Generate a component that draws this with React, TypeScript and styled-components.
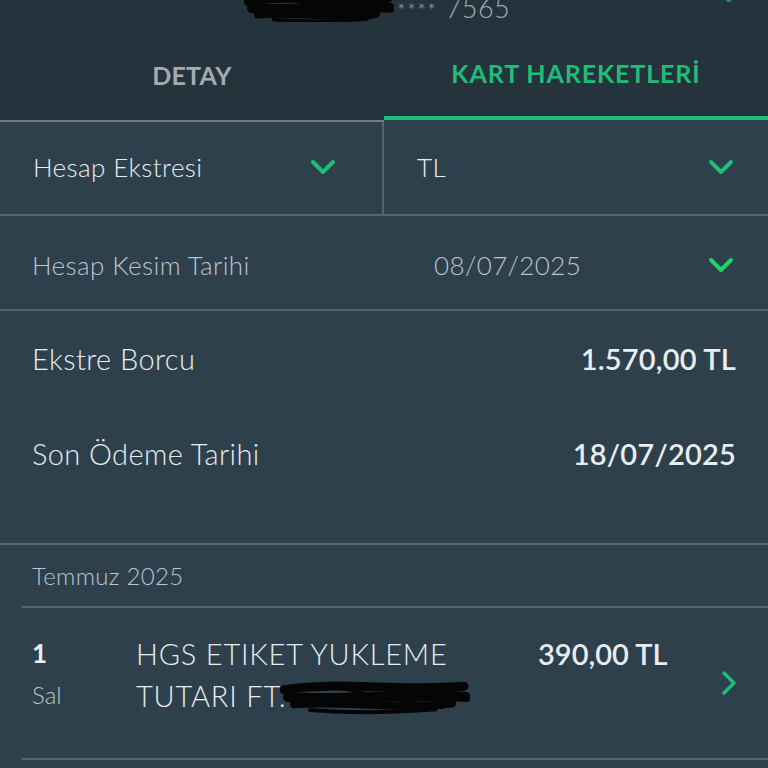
import React from "react";
import styled, { createGlobalStyle } from "styled-components";

const colors = {
  header: "#25333d",
  body: "#2e404c",
  line: "#55656f",
  green: "#1fbd78",
  brightGreen: "#1fd66a",
  text: "#e8edf0",
  muted: "#bcc5cb",
  tabMuted: "#a3abb1",
};

const GlobalStyle = createGlobalStyle`
  *, *::before, *::after {
    box-sizing: border-box;
  }
  html, body {
    margin: 0;
    padding: 0;
    background: ${colors.body};
  }
  body {
    font-family: Lato, "Noto Sans", sans-serif;
    -webkit-font-smoothing: antialiased;
  }
`;

const Screen = styled.div`
  width: 768px;
  height: 768px;
  overflow: hidden;
  background: ${colors.body};
  display: flex;
  flex-direction: column;
`;

const Header = styled.div`
  background: ${colors.header};
  height: 120px;
  flex-shrink: 0;
  display: flex;
  flex-direction: column;
`;

const CardLine = styled.div`
  position: relative;
  height: 22px;
  overflow: hidden;
  display: flex;
  align-items: flex-end;
  padding-left: 370px;
`;

const CardNumber = styled.span`
  font-size: 27px;
  font-weight: 300;
  color: #a4adb4;
  line-height: 1;
  margin-bottom: 1px;
  letter-spacing: 0.5px;
`;

const Stars = styled.span`
  font-size: 19px;
  letter-spacing: 2px;
  margin-right: 8px;
`;

const Scribble = styled.svg`
  position: absolute;
`;

const TopScribble = styled(Scribble)`
  left: 244px;
  top: -8px;
`;

const CornerMark = styled.div`
  position: absolute;
  right: 36px;
  top: -4px;
  width: 6px;
  height: 6px;
  border-radius: 3px;
  background: #1f8f86;
`;

const Tabs = styled.div`
  flex: 1;
  display: grid;
  grid-template-columns: 1fr 1fr;
`;

const Tab = styled.div<{ $active?: boolean }>`
  display: flex;
  align-items: center;
  justify-content: center;
  padding-top: 8px;
  font-size: 25px;
  font-weight: 700;
  letter-spacing: ${(p) => (p.$active ? "0.9px" : "0.2px")};
  color: ${(p) => (p.$active ? colors.green : colors.tabMuted)};
  border-bottom: ${(p) => (p.$active ? `4px solid ${colors.green}` : `2px solid #6e7d87`)};
  border-radius: ${(p) => (p.$active ? "3px 3px 0 0" : "0")};
  margin-bottom: ${(p) => (p.$active ? "0" : "-2px")};
  z-index: ${(p) => (p.$active ? 1 : 0)};
`;

const FilterRow = styled.div`
  display: grid;
  grid-template-columns: 1fr 1fr;
  height: 96px;
  flex-shrink: 0;
  border-bottom: 2px solid ${colors.line};
`;

const Select = styled.div<{ $divider?: boolean }>`
  min-width: 0;
  display: flex;
  align-items: center;
  justify-content: space-between;
  padding: 0 ${(p) => (p.$divider ? "46px" : "34px")} 0 33px;
  border-right: ${(p) => (p.$divider ? `2px solid ${colors.line}` : "none")};
  font-size: 26px;
  font-weight: 300;
  letter-spacing: 0.4px;
  color: ${colors.text};
`;

const DateRow = styled.div`
  display: grid;
  grid-template-columns: 402px 1fr auto;
  align-items: center;
  height: 95px;
  flex-shrink: 0;
  padding: 4px 34px 0 32px;
  border-bottom: 2px solid ${colors.line};
  font-size: 26px;
  font-weight: 300;
  letter-spacing: 0.4px;
  color: ${colors.muted};
`;

const Summary = styled.div`
  display: flex;
  flex-direction: column;
  padding: 0 32px;
  height: 234px;
  flex-shrink: 0;
  border-bottom: 2px solid ${colors.line};
`;

const SummaryRow = styled.div`
  display: flex;
  justify-content: space-between;
  align-items: center;
  height: 95px;
`;

const SummaryLabel = styled.span`
  font-size: 29px;
  font-weight: 300;
  letter-spacing: 0.4px;
  color: ${colors.text};
`;

const SummaryValue = styled.span`
  font-size: 29px;
  font-weight: 600;
  letter-spacing: 0.2px;
  color: ${colors.text};
`;

const MonthHeader = styled.div`
  height: 61px;
  flex-shrink: 0;
  display: flex;
  align-items: center;
  padding-left: 32px;
  font-size: 24px;
  font-weight: 300;
  letter-spacing: 0.3px;
  color: ${colors.muted};
`;

const Divider = styled.div`
  height: 2px;
  flex-shrink: 0;
  margin-left: 22px;
  background: ${colors.line};
`;

const TxRow = styled.div`
  display: grid;
  grid-template-columns: 104px 402px 1fr 40px;
  align-items: center;
  height: 150px;
  flex-shrink: 0;
  padding: 0 31px 0 32px;
`;

const DayCol = styled.div`
  display: flex;
  flex-direction: column;
  gap: 11px;
  margin-top: -20px;
`;

const Day = styled.span`
  font-size: 26px;
  font-weight: 700;
  color: ${colors.text};
`;

const WeekDay = styled.span`
  font-size: 24px;
  font-weight: 300;
  color: ${colors.muted};
`;

const Description = styled.div`
  position: relative;
  margin-top: -16px;
  font-size: 29px;
  font-weight: 300;
  line-height: 42px;
  letter-spacing: 0.8px;
  color: ${colors.text};
`;

const Amount = styled.div`
  align-self: start;
  margin-top: 28px;
  font-size: 29px;
  font-weight: 600;
  color: ${colors.text};
`;

const ChevronCell = styled.div`
  justify-self: end;
  display: flex;
`;

const BottomScribble = styled(Scribble)`
  left: 144px;
  top: 46px;
`;

const Chevron = ({ color = colors.green }: { color?: string }) => (
  <svg width="26" height="16" viewBox="0 0 26 16">
    <path d="M3 3 L13 13 L23 3" fill="none" stroke={color} strokeWidth="4" strokeLinecap="round" strokeLinejoin="round" />
  </svg>
);

const ChevronRight = () => (
  <svg width="16" height="26" viewBox="0 0 16 26">
    <path d="M3 3 L13 13 L3 23" fill="none" stroke={colors.green} strokeWidth="3.5" strokeLinecap="round" strokeLinejoin="round" />
  </svg>
);

// hand-drawn black marker strokes used to hide parts of the card / reference number
const Redaction = ({ width, height }: { width: number; height: number }) => (
  <g stroke="#050505" strokeLinecap="round" fill="none">
    <path d={`M4 ${height * 0.3} C ${width * 0.3} ${height * 0.05}, ${width * 0.6} ${height * 0.35}, ${width - 6} ${height * 0.2}`} strokeWidth="9" />
    <path d={`M8 ${height * 0.5} C ${width * 0.3} ${height * 0.62}, ${width * 0.7} ${height * 0.38}, ${width - 4} ${height * 0.5}`} strokeWidth="10" />
    <path d={`M14 ${height * 0.7} C ${width * 0.35} ${height * 0.6}, ${width * 0.6} ${height * 0.85}, ${width - 18} ${height * 0.68}`} strokeWidth="8" />
    <path d={`M30 ${height * 0.86} C ${width * 0.45} ${height * 0.98}, ${width * 0.65} ${height * 0.9}, ${width * 0.82} ${height * 0.84}`} strokeWidth="4" />
    <path d={`M${width * 0.2} ${height * 0.15} L ${width * 0.85} ${height * 0.8}`} strokeWidth="3" />
  </g>
);

export default function App() {
  return (
    <Screen>
      <GlobalStyle />
      <Header>
        <CardLine>
          <CardNumber>
            <Stars>** ****</Stars>7565
          </CardNumber>
          <TopScribble width="150" height="36" viewBox="0 0 150 36">
            <Redaction width={150} height={32} />
          </TopScribble>
          <CornerMark />
        </CardLine>
        <Tabs>
          <Tab>DETAY</Tab>
          <Tab $active>KART HAREKETLERİ</Tab>
        </Tabs>
      </Header>

      <FilterRow>
        <Select $divider>
          Hesap Ekstresi
          <Chevron />
        </Select>
        <Select>
          TL
          <Chevron />
        </Select>
      </FilterRow>

      <DateRow>
        <span>Hesap Kesim Tarihi</span>
        <span>08/07/2025</span>
        <Chevron color={colors.brightGreen} />
      </DateRow>

      <Summary>
        <SummaryRow>
          <SummaryLabel>Ekstre Borcu</SummaryLabel>
          <SummaryValue>1.570,00 TL</SummaryValue>
        </SummaryRow>
        <SummaryRow>
          <SummaryLabel>Son Ödeme Tarihi</SummaryLabel>
          <SummaryValue>18/07/2025</SummaryValue>
        </SummaryRow>
      </Summary>

      <MonthHeader>Temmuz 2025</MonthHeader>
      <Divider />

      <TxRow>
        <DayCol>
          <Day>1</Day>
          <WeekDay>Sal</WeekDay>
        </DayCol>
        <Description>
          HGS ETIKET YUKLEME
          <br />
          TUTARI FT.
          <BottomScribble width="190" height="40" viewBox="0 0 190 40">
            <Redaction width={190} height={36} />
          </BottomScribble>
        </Description>
        <Amount>390,00 TL</Amount>
        <ChevronCell>
          <ChevronRight />
        </ChevronCell>
      </TxRow>
      <Divider />
    </Screen>
  );
}
